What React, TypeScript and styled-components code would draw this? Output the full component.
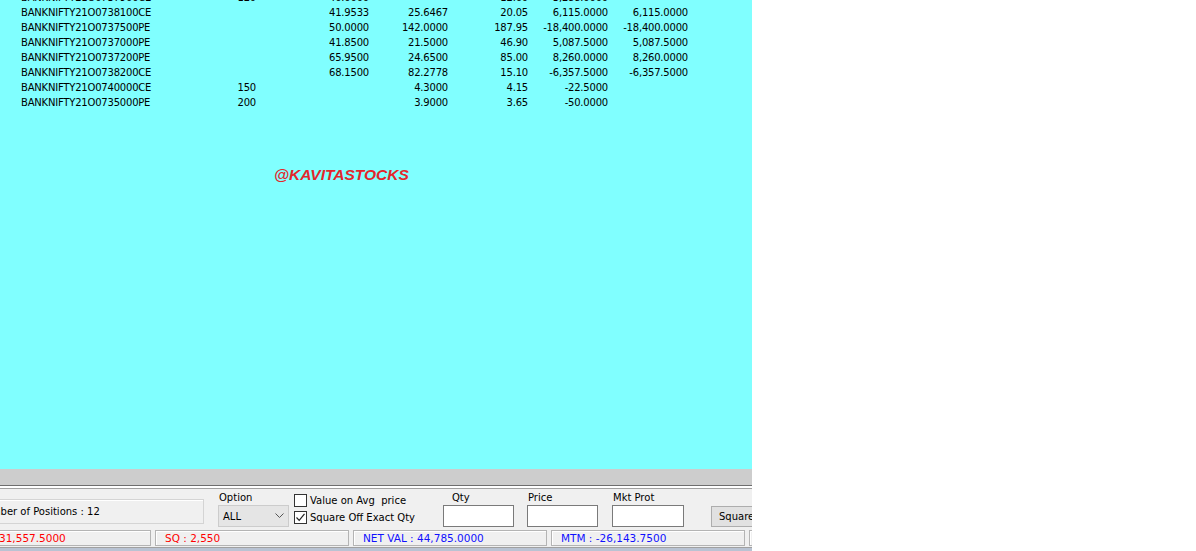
import * as React from 'react';
import styled, { createGlobalStyle } from 'styled-components';

const GlobalStyle = createGlobalStyle`
  html, body {
    margin: 0;
    padding: 0;
    background: #ffffff;
  }
  body {
    font-family: "DejaVu Sans", Tahoma, sans-serif;
    font-size: 10px;
    color: #000;
  }
`;

type Row = {
  symbol: string;
  qty?: string;
  avg?: string;
  buy?: string;
  ltp?: string;
  mtm?: string;
  pnl?: string;
};

const rows: Row[] = [
  { symbol: 'BANKNIFTY21O0737900CE', qty: '120', avg: '40.0000', ltp: '12.60', mtm: '3,288.0000' },
  { symbol: 'BANKNIFTY21O0738100CE', avg: '41.9533', buy: '25.6467', ltp: '20.05', mtm: '6,115.0000', pnl: '6,115.0000' },
  { symbol: 'BANKNIFTY21O0737500PE', avg: '50.0000', buy: '142.0000', ltp: '187.95', mtm: '-18,400.0000', pnl: '-18,400.0000' },
  { symbol: 'BANKNIFTY21O0737000PE', avg: '41.8500', buy: '21.5000', ltp: '46.90', mtm: '5,087.5000', pnl: '5,087.5000' },
  { symbol: 'BANKNIFTY21O0737200PE', avg: '65.9500', buy: '24.6500', ltp: '85.00', mtm: '8,260.0000', pnl: '8,260.0000' },
  { symbol: 'BANKNIFTY21O0738200CE', avg: '68.1500', buy: '82.2778', ltp: '15.10', mtm: '-6,357.5000', pnl: '-6,357.5000' },
  { symbol: 'BANKNIFTY21O0740000CE', qty: '150', buy: '4.3000', ltp: '4.15', mtm: '-22.5000' },
  { symbol: 'BANKNIFTY21O0735000PE', qty: '200', buy: '3.9000', ltp: '3.65', mtm: '-50.0000' },
];

const Window = styled.div`
  width: 752px;
  height: 551px;
  display: flex;
  flex-direction: column;
  background: #f0f0f0;
  overflow: hidden;
`;

const Grid = styled.div`
  position: relative;
  height: 469px;
  flex: none;
  background: #80ffff;
  overflow: hidden;
`;

// grid is scrolled: the first row is only partly visible
const GridBody = styled.div`
  margin-top: -10px;
  padding-left: 21px;
  letter-spacing: -0.2px;
`;

const GridRow = styled.div`
  display: grid;
  grid-template-columns: 180px 55px 113px 79px 80px 80px 80px;
  height: 15px;
  line-height: 15px;
  white-space: nowrap;
`;

const Cell = styled.span<{ $num?: boolean }>`
  text-align: ${(p) => (p.$num ? 'right' : 'left')};
  overflow: hidden;
`;

const Watermark = styled.div`
  position: absolute;
  left: 274px;
  top: 166px;
  font-family: "Liberation Sans", Arial, sans-serif;
  font-weight: 700;
  font-style: italic;
  font-size: 15.5px;
  color: #e3262b;
`;

const HScroll = styled.div`
  height: 16px;
  flex: none;
  background: #cdcdcd;
`;

const Splitter = styled.div`
  height: 2px;
  flex: none;
  background: #ffffff;
  border-top: 1px solid #6e6e6e;
  border-bottom: 1px solid #a0a0a0;
`;

const Controls = styled.div`
  height: 40px;
  flex: none;
  display: flex;
  align-items: flex-start;
  white-space: nowrap;
`;

const PositionsBox = styled.div`
  flex: none;
  margin: 10px 0 0 -30px;
  width: 234px;
  height: 25px;
  box-sizing: border-box;
  border: 1px solid #d4d4d4;
  box-shadow: inset 1px 1px 0 #ffffff;
  padding-left: 6px;
  line-height: 23px;
`;

const Field = styled.div<{ $ml: number }>`
  flex: none;
  margin-left: ${(p) => p.$ml}px;
  display: flex;
  flex-direction: column;
`;

const FieldLabel = styled.span<{ $indent?: number }>`
  height: 14px;
  line-height: 14px;
  padding-left: ${(p) => p.$indent ?? 1}px;
  margin-top: 2px;
`;

const Select = styled.div`
  width: 71px;
  height: 22px;
  box-sizing: border-box;
  background: #e5e5e5;
  border: 1px solid #cccccc;
  display: flex;
  align-items: center;
  justify-content: space-between;
  padding: 0 4px;
`;

const Checks = styled.div`
  flex: none;
  margin-left: 5px;
  margin-top: 5px;
  display: flex;
  flex-direction: column;
  gap: 4px;
`;

const CheckRow = styled.label`
  display: flex;
  align-items: center;
  gap: 3px;
  height: 13px;
`;

const Box = styled.span`
  width: 13px;
  height: 13px;
  box-sizing: border-box;
  background: #ffffff;
  border: 1px solid #333333;
  display: inline-flex;
  align-items: center;
  justify-content: center;
`;

const Input = styled.div<{ $w: number }>`
  width: ${(p) => p.$w}px;
  height: 22px;
  box-sizing: border-box;
  background: #ffffff;
  border: 1px solid #7a7a7a;
`;

const Button = styled.div`
  flex: none;
  margin-left: 27px;
  margin-top: 17px;
  height: 21px;
  box-sizing: border-box;
  padding: 0 7px;
  line-height: 19px;
  background: #e1e1e1;
  border: 1px solid #adadad;
`;

const StatusBar = styled.div`
  height: 18px;
  flex: none;
  display: flex;
  gap: 4px;
  white-space: nowrap;
`;

const StatusBox = styled.div<{ $w: number; $color: string; $ml?: number; $pl?: number }>`
  flex: none;
  width: ${(p) => p.$w}px;
  margin-left: ${(p) => p.$ml ?? 0}px;
  margin-top: 1px;
  height: 16px;
  box-sizing: border-box;
  border: 1px solid #b4b4b4;
  box-shadow: inset 1px 1px 0 #ffffff;
  padding-left: ${(p) => p.$pl ?? 9}px;
  line-height: 14px;
  font-size: 10.5px;
  color: ${(p) => p.$color};
  overflow: hidden;
`;

const BottomEdge = styled.div`
  height: 4px;
  flex: none;
  border-top: 1px solid #a0a0a0;
  background: #b9c3d3;
`;

const Chevron = () => (
  <svg width="9" height="6" viewBox="0 0 9 6">
    <path d="M0.5 0.5 L4.5 4.5 L8.5 0.5" fill="none" stroke="#555" strokeWidth="1" />
  </svg>
);

const Tick = () => (
  <svg width="11" height="11" viewBox="0 0 11 11">
    <path d="M1.5 5.5 L4.2 8.3 L9.5 1.8" fill="none" stroke="#222" strokeWidth="1.2" />
  </svg>
);

export default function App() {
  return (
    <>
      <GlobalStyle />
      <Window>
        <Grid>
          <GridBody>
            {rows.map((r) => (
              <GridRow key={r.symbol}>
                <Cell>{r.symbol}</Cell>
                <Cell $num>{r.qty}</Cell>
                <Cell $num>{r.avg}</Cell>
                <Cell $num>{r.buy}</Cell>
                <Cell $num>{r.ltp}</Cell>
                <Cell $num>{r.mtm}</Cell>
                <Cell $num>{r.pnl}</Cell>
              </GridRow>
            ))}
          </GridBody>
          <Watermark>@KAVITASTOCKS</Watermark>
        </Grid>
        <HScroll />
        <Splitter />
        <Controls>
          <PositionsBox>Number of Positions : 12</PositionsBox>
          <Field $ml={14}>
            <FieldLabel>Option</FieldLabel>
            <Select>
              <span>ALL</span>
              <Chevron />
            </Select>
          </Field>
          <Checks>
            <CheckRow>
              <Box />
              <span>Value on Avg&nbsp; price</span>
            </CheckRow>
            <CheckRow>
              <Box>
                <Tick />
              </Box>
              <span>Square Off Exact Qty</span>
            </CheckRow>
          </Checks>
          <Field $ml={28}>
            <FieldLabel $indent={9}>Qty</FieldLabel>
            <Input $w={71} />
          </Field>
          <Field $ml={13}>
            <FieldLabel>Price</FieldLabel>
            <Input $w={71} />
          </Field>
          <Field $ml={14}>
            <FieldLabel>Mkt Prot</FieldLabel>
            <Input $w={72} />
          </Field>
          <Button>Square Off</Button>
        </Controls>
        <StatusBar>
          <StatusBox $w={161} $ml={-10} $pl={8} $color="#ff0000">
            31,557.5000
          </StatusBox>
          <StatusBox $w={194} $color="#ff0000">SQ : 2,550</StatusBox>
          <StatusBox $w={194} $color="#1010ff">NET VAL : 44,785.0000</StatusBox>
          <StatusBox $w={194} $color="#1010ff">MTM : -26,143.7500</StatusBox>
          <StatusBox $w={60} $color="#1010ff" />
        </StatusBar>
        <BottomEdge />
      </Window>
    </>
  );
}
